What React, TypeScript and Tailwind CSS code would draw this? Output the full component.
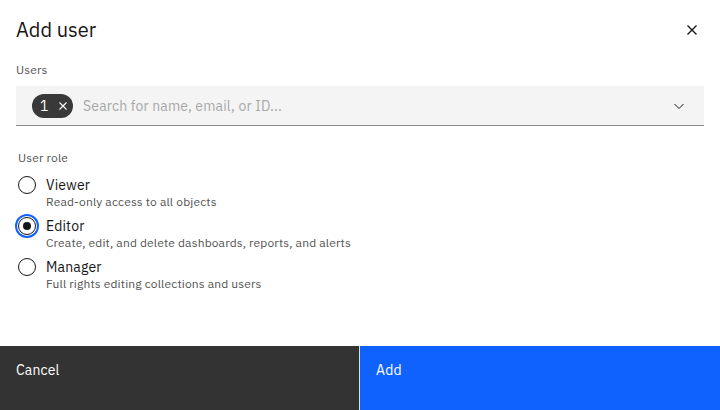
import React from "react";

const roles = [
  { id: "viewer", label: "Viewer", desc: "Read-only access to all objects" },
  { id: "editor", label: "Editor", desc: "Create, edit, and delete dashboards, reports, and alerts" },
  { id: "manager", label: "Manager", desc: "Full rights editing collections and users" },
];

function CloseIcon({ className }: { className?: string }) {
  return (
    <svg viewBox="0 0 16 16" className={className} fill="none" stroke="currentColor" strokeWidth="1.4">
      <path d="M3.5 3.5l9 9M12.5 3.5l-9 9" />
    </svg>
  );
}

function Radio({ checked, focused }: { checked: boolean; focused?: boolean }) {
  return (
    <span
      className={
        "flex h-[18px] w-[18px] shrink-0 items-center justify-center rounded-full border border-[#161616] bg-white " +
        (focused ? "ring-2 ring-[#0f62fe] ring-offset-1" : "")
      }
    >
      {checked && <span className="h-2 w-2 rounded-full bg-[#161616]" />}
    </span>
  );
}

export default function App() {
  const [role, setRole] = React.useState("editor");

  return (
    <div
      className="flex h-[410px] w-[720px] flex-col bg-white text-[#161616]"
      style={{ fontFamily: "'IBM Plex Sans', Roboto, 'Liberation Sans', sans-serif" }}
    >
      <div className="flex items-start justify-between pl-4 pr-4 pt-4">
        <h2 className="text-[20px] leading-7 font-normal">Add user</h2>
        <button className="mt-[2px] flex h-6 w-6 items-center justify-center text-[#161616]">
          <CloseIcon className="h-4 w-4" />
        </button>
      </div>

      <div className="mt-[18px] px-4">
        <label className="block text-xs leading-4 tracking-[0.15px] text-[#525252]">Users</label>
        <div className="mt-2 flex h-10 items-center border-b border-[#8d8d8d] bg-[#f4f4f4] pl-4 pr-4">
          <span className="flex h-6 items-center rounded-full bg-[#393939] pl-2 pr-[6px] text-sm text-white">
            <span className="w-[8px]">1</span>
            <svg viewBox="0 0 8 8" className="ml-[11px] h-2 w-2" fill="none" stroke="currentColor" strokeWidth="1.1">
              <path d="M0.5 0.5l7 7M7.5 0.5l-7 7" />
            </svg>
          </span>
          <span className="ml-[10px] flex-1 text-sm tracking-[0.16px] text-[#a8a8a8]">Search for name, email, or ID...</span>
          <svg viewBox="0 0 16 16" className="mr-[1px] h-4 w-4 text-[#161616]" fill="none" stroke="currentColor" strokeWidth="1">
            <path d="M3.5 6l4.5 4.5L12.5 6" />
          </svg>
        </div>
      </div>

      <fieldset className="mt-6 pl-[18px]">
        <legend className="text-xs leading-4 tracking-[0.15px] text-[#525252]">User role</legend>
        <div className="mt-[10px] flex flex-col gap-[7px]">
          {roles.map((r) => (
            <label key={r.id} className="flex cursor-pointer items-start gap-[10px]" onClick={() => setRole(r.id)}>
              <span>
                <Radio checked={role === r.id} focused={r.id === "editor"} />
              </span>
              <span className="flex flex-col">
                <span className="text-sm leading-[18px] tracking-[0.16px]">{r.label}</span>
                <span className="text-xs leading-4 tracking-[0.15px] text-[#525252]">{r.desc}</span>
              </span>
            </label>
          ))}
        </div>
      </fieldset>

      <div className="mt-auto flex h-16">
        <button className="flex h-16 w-[359px] items-start bg-[#333333] px-4 pt-[14px] text-sm leading-5 tracking-[0.16px] text-white">
          Cancel
        </button>
        <div className="w-px bg-[#e0e0e0]" />
        <button className="flex h-16 flex-1 items-start bg-[#0f62fe] px-4 pt-[14px] text-sm leading-5 tracking-[0.16px] text-white">
          Add
        </button>
      </div>
    </div>
  );
}
